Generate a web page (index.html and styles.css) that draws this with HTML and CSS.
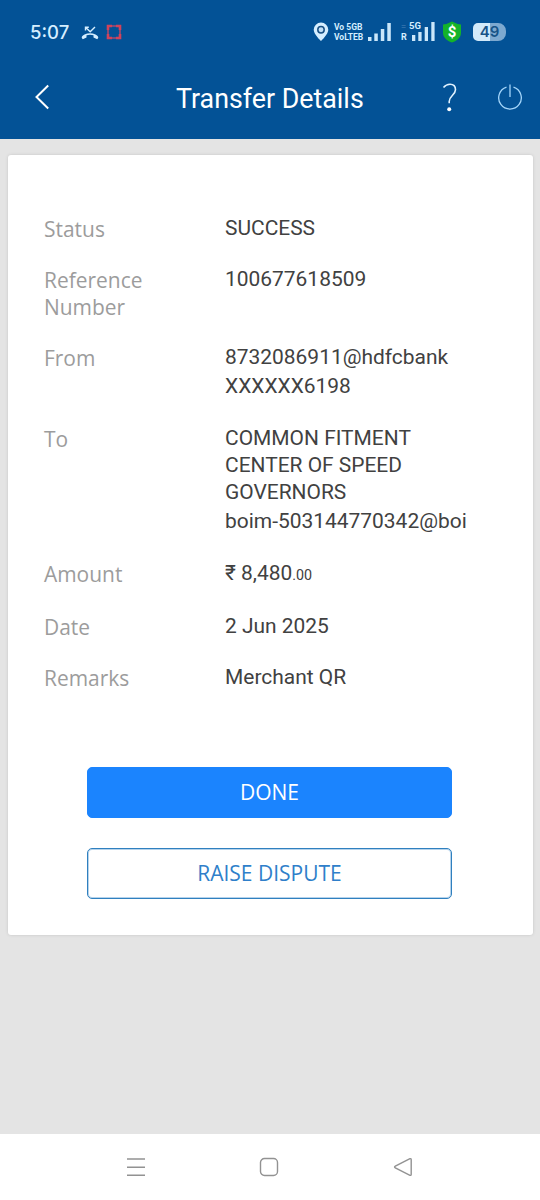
FILE: index.html
```html
<!DOCTYPE html>
<html lang="en">
<head>
<meta charset="utf-8">
<title>Transfer Details</title>
<link rel="stylesheet" href="styles.css">
</head>
<body>
<div class="screen">
  <header class="top">
    <div class="status-bar">
      <span class="clock">5:07</span>
      <svg class="missed" width="18" height="14" viewBox="0 0 18 14"><path d="M1 12.2c-.8-1 0-2.400 2.500-3.700 3.500-1.700 7.500-1.700 11 0 2.500 1.300 3.300 2.700 2.500 3.700l-.8 1-3.700-1.600V9.300c-2.300-.8-4.700-.8-7 0v2.300L1.800 13.200z" fill="#d5eeff"/><path d="M4.500 4.500V1.200h3.300M4.800 1.500l4.400 4.300L14 1" fill="none" stroke="#d5eeff" stroke-width="1.400"/></svg>
      <svg class="record" width="16" height="16" viewBox="0 0 16 16"><path d="M2 6V2h4M10 2h4v4M14 10v4h-4M6 14H2v-4" fill="none" stroke="#d0435b" stroke-width="2.600"/><path d="M6 2h4M6 14h4M2 6v4M14 6v4" stroke="#a94a70" stroke-width="1.600"/></svg>
      <span class="spacer"></span>
      <svg class="pin" width="16" height="20" viewBox="0 0 16 20"><path d="M8 .5a7.300 7.300 0 0 1 7.300 7.300C15.300 12.500 8 19 8 19S.7 12.500.7 7.800A7.300 7.300 0 0 1 8 .5z" fill="#d5eeff"/><circle cx="8" cy="7.800" r="3.200" fill="#c2dff5" stroke="#174f83" stroke-width="1.500"/></svg>
      <span class="volte"><span>Vo 5GB</span><span>VoLTEB</span></span>
      <svg class="bars" width="23" height="18" viewBox="0 0 23 18"><path d="M0 14h3.500v4H0zM6.300 10.500h3.500V18H6.300zM12.800 6h3.500v12h-3.500zM19.300 0h3.500v18h-3.500z" fill="#cbe7fa"/></svg>
      <span class="roam"><span class="dash">=</span><span>R</span></span>
      <span class="five"><span>5G</span>
        <svg width="23" height="19" viewBox="0 0 23 19"><path d="M0 13h3.300v6H0zM6.300 10h3.300v9H6.300zM12.700 5H16v14h-3.300zM19.300 0h3.300v19h-3.300z" fill="#cbe7fa"/></svg>
      </span>
      <svg class="shield" width="20" height="22" viewBox="0 0 20 22"><path d="M10 .5Q14.500 3 19 3.500V12c0 5-5 8.200-9 9.500C6 20.200 1 17 1 12V3.500Q5.500 3 10 .5z" fill="#14b32a"/><text x="10" y="15.500" text-anchor="middle" class="dollar">$</text></svg>
      <span class="battery">49</span>
    </div>
    <nav class="title-bar">
      <svg class="back" width="16" height="26" viewBox="0 0 16 26"><path d="M14.200 1.500 2.500 13l11.700 11.500" fill="none" stroke="#fff" stroke-width="2"/></svg>
      <h1>Transfer Details</h1>
      <svg class="help" width="16" height="30" viewBox="0 0 16 30"><path d="M1.500 4.500C3.500 2 5.500 1.300 8 1.300c3.300 0 5.500 2.200 5.500 5.500 0 5-6.300 6-6.300 11.700v1.800" fill="none" stroke="#e0f2ff" stroke-width="1.600"/><circle cx="7.200" cy="26.300" r="2" fill="#fff"/></svg>
      <svg class="power" width="26" height="28" viewBox="0 0 26 28"><path d="M9.500 4.100a11.300 11.300 0 1 0 7 0M13 1.500V14" fill="none" stroke="#a5d6fa" stroke-width="1.300"/></svg>
    </nav>
  </header>

  <main class="content">
    <section class="card">
      <dl class="details">
        <dt>Status</dt><dd>SUCCESS</dd>
        <dt>Reference Number</dt><dd>100677618509</dd>
        <dt>From</dt><dd>8732086911@hdfcbank<span class="account">XXXXXX6198</span></dd>
        <dt>To</dt><dd>COMMON FITMENT<br>CENTER OF SPEED<br>GOVERNORS<span class="account">boim-503144770342@boi</span></dd>
        <dt>Amount</dt><dd class="amount">₹ 8,480<small>.00</small></dd>
        <dt>Date</dt><dd>2 Jun 2025</dd>
        <dt>Remarks</dt><dd>Merchant QR</dd>
      </dl>
      <div class="actions">
        <button class="btn primary">DONE</button>
        <button class="btn outline">RAISE DISPUTE</button>
      </div>
    </section>
  </main>

  <footer class="nav">
    <svg width="20" height="20" viewBox="0 0 20 20"><path d="M1 2h18M1 10.200h18M1 18.300h18"/></svg>
    <svg width="20" height="20" viewBox="0 0 20 20"><rect x="1.500" y="1.500" width="17" height="17" rx="4"/></svg>
    <svg width="20" height="20" viewBox="0 0 20 20"><path d="M17 1.700 2.300 9.200q-1.500.8 0 1.600L17 18.300q1.200.4 1.200-1V2.700q0-1.400-1.200-1z"/></svg>
  </footer>
</div>
</body>
</html>
```

FILE: styles.css
```css
* { box-sizing: border-box; }
body { margin: 0; font-family: Roboto, sans-serif; }
.screen {
  display: flex;
  flex-direction: column;
  width: 540px;
  height: 1200px;
  background: #e4e4e4;
}
.top { height: 139px; background: #035296; }

.status-bar {
  display: flex;
  align-items: center;
  height: 63px;
  padding: 0 34px 0 30px;
  color: #d5eeff;
}
.clock { width: 51px; font: 500 18.5px/22px Inter, sans-serif; }
.missed { margin-top: 2px; }
.record { margin-left: 7px; }
.spacer { flex: 1; }
.pin { margin-right: 5px; }
.volte {
  display: flex;
  flex-direction: column;
  width: 34px;
  font: 700 8.500px/10px Roboto, sans-serif;
  white-space: nowrap;
}
.bars { margin-top: 0; }
.roam {
  display: flex;
  flex-direction: column;
  width: 11px;
  margin-left: 10px;
  font: 700 9px/10px Roboto, sans-serif;
}
.dash { color: #2d6ea9; }
.five {
  position: relative;
  display: flex;
  width: 23px;
  margin-right: 7px;
}
.five span {
  position: absolute;
  left: -3px;
  top: -1px;
  background: #035296;
  font: 700 9.500px/10px Roboto, sans-serif;
}
.dollar { font: 700 15px Roboto, sans-serif; fill: #fff; }
.battery {
  width: 33px;
  height: 18px;
  margin-left: 11px;
  border-radius: 5px 8px 8px 5px;
  background: linear-gradient(90deg, #d2eafa 50%, #7da9d0 50%);
  color: #165387;
  font: 600 15px/18px Inter, sans-serif;
  text-align: center;
}

.title-bar {
  display: grid;
  grid-template-columns: 176px 1fr 53px 47px;
  align-items: center;
  height: 69px;
}
.back { margin-left: 34px; margin-top: -1px; }
h1 {
  margin: 2px 0 0;
  color: #fff;
  font: 400 26.8px/32px Roboto, sans-serif;
  white-space: nowrap;
}
.help { margin-left: 2px; }
.power { margin-left: 4px; margin-top: -1px; }

.content { flex: 1; padding: 16px 7px 16px 8px; }
.card {
  height: 780px;
  padding: 60px 36px 0;
  border-radius: 3px;
  background: #fff;
  box-shadow: 0 0 3px #c4c4c4;
}
.details {
  display: grid;
  grid-template-columns: 181px 1fr;
  row-gap: 24px;
  margin: 0;
  font-size: 20.95px;
  line-height: 27px;
}
dt {
  width: 120px;
  margin: 1px 0 -1px;
  color: #9c9c9c;
  font-family: "Open Sans", sans-serif;
  font-weight: 400;
}
dd { margin: 0; color: #414141; }
.account { display: block; padding-top: 1px; line-height: 29px; }
.amount small { font-size: 14.3px; }

.actions {
  display: flex;
  flex-direction: column;
  gap: 30px;
  padding: 76px 45px 0 43px;
}
.btn {
  height: 51px;
  padding: 0;
  border: 1px solid #1b84fe;
  border-radius: 5px;
  font: 400 21px/27px "Open Sans", sans-serif;
}
.primary { background: #1b84fe; color: #fff; }
.outline {
  border-color: #2f80bf;
  background: #fff;
  box-shadow: inset 0 0 0 1px rgba(47, 130, 198, .35);
  color: #2f7fca;
}

.nav {
  display: flex;
  align-items: center;
  gap: 113.500px;
  height: 66px;
  padding-left: 125.500px;
  background: #fff;
}
.nav svg { fill: none; stroke: #929292; stroke-width: 1.400; }
```
